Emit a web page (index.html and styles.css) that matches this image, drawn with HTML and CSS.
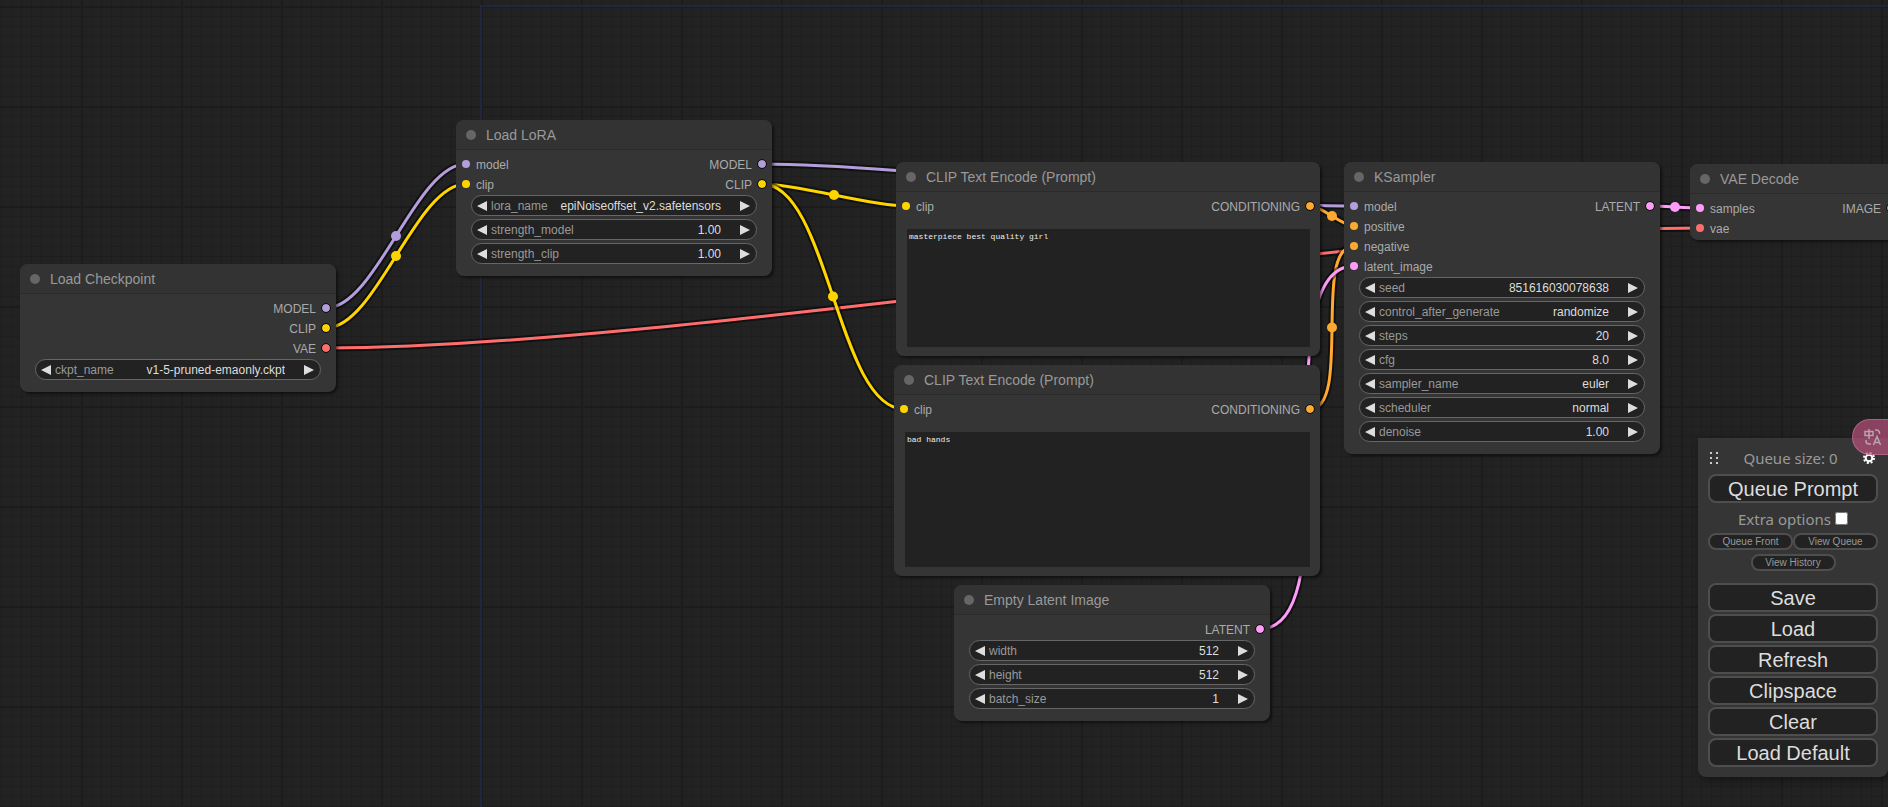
FILE: index.html
```html
<!DOCTYPE html>
<html lang="en">
<head>
<meta charset="utf-8">
<title>ComfyUI</title>
<link rel="stylesheet" href="styles.css">
</head>
<body>
<main class="stage">
  <svg class="links" aria-hidden="true">
    <defs>
      <pattern id="minor" x="1" y="6" width="10" height="10" patternUnits="userSpaceOnUse"><path class="grid-minor" d="M0 0H10V1H1V10H0Z"/></pattern>
      <pattern id="major" x="81" y="6" width="100" height="100" patternUnits="userSpaceOnUse"><path class="grid-major" d="M0 0H100V2H2V100H0Z"/></pattern>
    </defs>
    <rect width="100%" height="100%" fill="url(#minor)"/>
    <rect width="100%" height="100%" fill="url(#major)"/>
    <path class="origin" d="M4000 6H481V4000"/>
  </svg>
  <svg class="links" id="links" aria-hidden="true"></svg>
  <div id="nodes"></div>

  <aside class="menu">
    <div class="menu-head">
      <svg class="grip" width="8" height="13" viewBox="0 0 8 13"><path d="M0 0h2v2H0zM6 0h2v2H6zM0 5h2v2H0zM6 5h2v2H6zM0 10h2v2H0zM6 10h2v2H6z"/></svg>
      <span>Queue size: 0</span>
      <button class="gear" aria-label="Settings">
        <svg width="12" height="12" viewBox="0 0 12 12"><circle cx="6" cy="6" r="3.3" fill="none" stroke="currentColor" stroke-width="2"/><circle cx="6" cy="6" r="5" fill="none" stroke="currentColor" stroke-width="2" stroke-dasharray="2 1.93"/></svg>
      </button>
    </div>
    <button class="big">Queue Prompt</button>
    <label class="extra">Extra options <input type="checkbox"></label>
    <div class="small-row">
      <button class="small">Queue Front</button>
      <button class="small">View Queue</button>
      <button class="small">View History</button>
    </div>
    <div class="actions">
      <button class="big">Save</button>
      <button class="big">Load</button>
      <button class="big">Refresh</button>
      <button class="big">Clipspace</button>
      <button class="big">Clear</button>
      <button class="big">Load Default</button>
    </div>
  </aside>
  <button class="translate" aria-label="Translate">
    <svg width="18" height="18" viewBox="0 0 18 18" fill="none" stroke="currentColor" stroke-width="1.5"><path d="M1 3.500h8v4H1zM5 1v10M11 2h1.500a3 3 0 0 1 3 3v1M2 12v1a3 3 0 0 0 3 3h2M9.500 17l3.500-8.500L16.500 17M10.700 14.500h4.600"/></svg>
  </button>
</main>
<script src="app.js"></script>
</body>
</html>
```
FILE: styles.css
```css
* { box-sizing: border-box; }
body { margin: 0; background: #222; font-family: "Liberation Sans", Arial, sans-serif; }
button, input, select, textarea { font: inherit; color: inherit; margin: 0; padding: 0; border: 0; background: none; outline: 0; }
.stage { position: relative; height: 100vh; overflow: hidden; }
.links { position: absolute; inset: 0; width: 100%; height: 100%; }
.grid-minor { fill: #1e1e1e; }
.grid-major { fill: #1c1c1c; }
.origin { fill: none; stroke: #20273c; stroke-width: 2; }
.shade { fill: none; stroke: #000; stroke-opacity: .5; stroke-width: 7; }
.wire { fill: none; stroke-width: 3; }

.node { position: absolute; display: flex; flex-direction: column; width: 316px; padding-bottom: 12px; border-radius: 8px; background: #353535; box-shadow: 2px 2px 3px rgba(0, 0, 0, .5); font-size: 12px; color: #aaa; }
.node h2 { display: flex; align-items: center; gap: 10px; height: 30px; margin: 0; padding: 0 10px; border-bottom: 1px solid #2b2b2b; border-radius: 8px 8px 0 0; background: #333; font-size: 14px; font-weight: 400; color: #999; }
.node h2::before { content: ""; width: 10px; height: 10px; border-radius: 50%; background: #666; }
.checkpoint { left: 20px; top: 264px; }
.lora { left: 456px; top: 120px; }
.positive { left: 896px; top: 162px; width: 424px; height: 194px; }
.negative { left: 894px; top: 365px; width: 426px; height: 211px; }
.latent { left: 954px; top: 585px; }
.sampler { left: 1344px; top: 162px; }
.decode { left: 1690px; top: 164px; width: 211px; padding-bottom: 1px; }
.slots { display: flex; justify-content: space-between; padding: 5px 5px 0; }
.slots ul { margin: 0; padding: 0; list-style: none; }
.slots li { display: flex; align-items: center; gap: 5px; height: 20px; line-height: 20px; }
.slots .out li { flex-direction: row-reverse; }
.slots i { width: 10px; height: 10px; margin-bottom: 2px; border: 1px solid transparent; border-radius: 50%; background: currentColor; background-clip: padding-box; }
.slots .out i { border-color: #111; }
.model { color: #b39ddb; }
.clip { color: #ffd500; }
.vae { color: #ff6e6e; }
.cond { color: #ffa931; }
.lat { color: #ff9cf9; }
.image { color: #64b5f6; }
.widgets { display: grid; gap: 3px; padding: 0 15px; }
.widget { display: flex; align-items: center; height: 21px; padding: 0 6px 0 5px; border: 1px solid #666; border-radius: 11px; background: #222; color: #ddd; }
.widget button { display: flex; width: 10px; }
.widget svg { fill: currentColor; }
.widget label { margin-left: 4px; color: #999; }
.widget input, .widget select { flex: 1; width: 0; margin-right: 19px; appearance: none; text-align: right; text-align-last: right; }
.prompt { flex: 1; margin: 12px 10px 0 11px; padding: 2px; resize: none; background: #222; color: #eee; font: 8px/12px "Liberation Mono", monospace; }
.positive, .negative { padding-bottom: 9px; }

.menu { position: absolute; top: 438px; right: 0; width: 190px; padding: 10px; border-radius: 0 0 8px 8px; background: #353535; box-shadow: 3px 3px 8px rgba(0, 0, 0, .4); color: #999; font: 15px/20px "Noto Sans", "Open Sans", sans-serif; }
.menu-head { display: flex; align-items: center; justify-content: space-between; padding: 0 3px 0 2px; margin-bottom: 6px; }
.grip { fill: #ccc; }
.gear { display: flex; color: #fff; }
.big { display: block; width: 100%; height: 29px; border: 2px solid #4e4e4e; border-radius: 8px; background: #222; color: #ddd; font: 20px/24px "Liberation Sans", Arial, sans-serif; }
.extra { display: flex; align-items: center; justify-content: center; gap: 4px; height: 20px; margin: 6px 0 4px; }
.extra input { width: 13px; height: 13px; margin-bottom: 2px; }
.small-row { display: flex; flex-wrap: wrap; justify-content: center; gap: 4px 0; }
.small { width: 50%; height: 17px; border: 2px solid #4e4e4e; border-radius: 8px; background: #222; color: #999; font: 10px/12px "Liberation Sans", Arial, sans-serif; }
.actions { display: grid; gap: 2px; margin-top: 12px; }
.translate { position: absolute; top: 419px; right: 0; display: flex; align-items: center; width: 36px; height: 36px; padding-left: 11px; border: 1px solid rgba(200, 130, 160, .5); border-right: 0; border-radius: 18px 0 0 18px; background: rgba(196, 84, 132, .65); color: #b9a2ad; }
```
FILE: app.js
```js
const nodes = [
  { cls: 'checkpoint', title: 'Load Checkpoint', out: [['MODEL', 'model'], ['CLIP', 'clip'], ['VAE', 'vae']],
    widgets: [['ckpt_name', 'v1-5-pruned-emaonly.ckpt', 'combo']] },
  { cls: 'lora', title: 'Load LoRA', in: [['model', 'model'], ['clip', 'clip']], out: [['MODEL', 'model'], ['CLIP', 'clip']],
    widgets: [['lora_name', 'epiNoiseoffset_v2.safetensors', 'combo'], ['strength_model', '1.00'], ['strength_clip', '1.00']] },
  { cls: 'latent', title: 'Empty Latent Image', out: [['LATENT', 'lat']],
    widgets: [['width', '512'], ['height', '512'], ['batch_size', '1']] },
  { cls: 'positive', title: 'CLIP Text Encode (Prompt)', in: [['clip', 'clip']], out: [['CONDITIONING', 'cond']], text: 'masterpiece best quality girl' },
  { cls: 'negative', title: 'CLIP Text Encode (Prompt)', in: [['clip', 'clip']], out: [['CONDITIONING', 'cond']], text: 'bad hands' },
  { cls: 'sampler', title: 'KSampler', in: [['model', 'model'], ['positive', 'cond'], ['negative', 'cond'], ['latent_image', 'lat']], out: [['LATENT', 'lat']],
    widgets: [['seed', '851616030078638'], ['control_after_generate', 'randomize', 'combo'], ['steps', '20'], ['cfg', '8.0'], ['sampler_name', 'euler', 'combo'], ['scheduler', 'normal', 'combo'], ['denoise', '1.00']] },
  { cls: 'decode', title: 'VAE Decode', in: [['samples', 'lat'], ['vae', 'vae']], out: [['IMAGE', 'image']] },
];

const slotList = (cls, slots = []) =>
  `<ul class="${cls}">${slots.map(([name, type]) => `<li><i class="${type}"></i>${name}</li>`).join('')}</ul>`;

const widget = (node, [name, value, kind]) => {
  const id = `${node}-${name}`;
  const field = kind === 'combo'
    ? `<select id="${id}"><option>${value}</option></select>`
    : `<input id="${id}" value="${value}">`;
  return `<div class="widget">
    <button aria-label="Previous ${name}"><svg width="10" height="10"><path d="M10 0V10L0 5Z"/></svg></button>
    <label for="${id}">${name}</label>${field}
    <button aria-label="Next ${name}"><svg width="10" height="10"><path d="M0 0V10L10 5Z"/></svg></button>
  </div>`;
};

document.getElementById('nodes').innerHTML = nodes.map(n => `<section class="node ${n.cls}">
  <h2>${n.title}</h2>
  <div class="slots">${slotList('in', n.in)}${slotList('out', n.out)}</div>
  ${n.widgets ? `<div class="widgets">${n.widgets.map(w => widget(n.cls, w)).join('')}</div>` : ''}
  ${n.text ? `<textarea class="prompt" aria-label="Prompt text" spellcheck="false">${n.text}</textarea>` : ''}
</section>`).join('');

// Each link: type, start x, start y, end x, end y.
const links = [
  ['model', 326, 308, 466, 164],
  ['clip', 326, 328, 466, 184],
  ['model', 762, 164, 1354, 206],
  ['vae', 326, 348, 1700, 228],
  ['clip', 762, 184, 906, 206],
  ['clip', 762, 184, 904, 409],
  ['cond', 1310, 206, 1354, 226],
  ['cond', 1310, 409, 1354, 246],
  ['lat', 1260, 629, 1354, 266],
  ['lat', 1650, 206, 1700, 208],
];

document.getElementById('links').innerHTML = links.map(([type, x1, y1, x2, y2]) => {
  const reach = Math.hypot(x2 - x1, y2 - y1) / 4;
  const d = `M${x1} ${y1}C${x1 + reach} ${y1} ${x2 - reach} ${y2} ${x2} ${y2}`;
  return `<g class="${type}"><path class="shade" d="${d}"/><path class="wire" stroke="currentColor" d="${d}"/>
    <circle cx="${(x1 + x2) / 2}" cy="${(y1 + y2) / 2}" r="5" fill="currentColor"/></g>`;
}).join('');
```
